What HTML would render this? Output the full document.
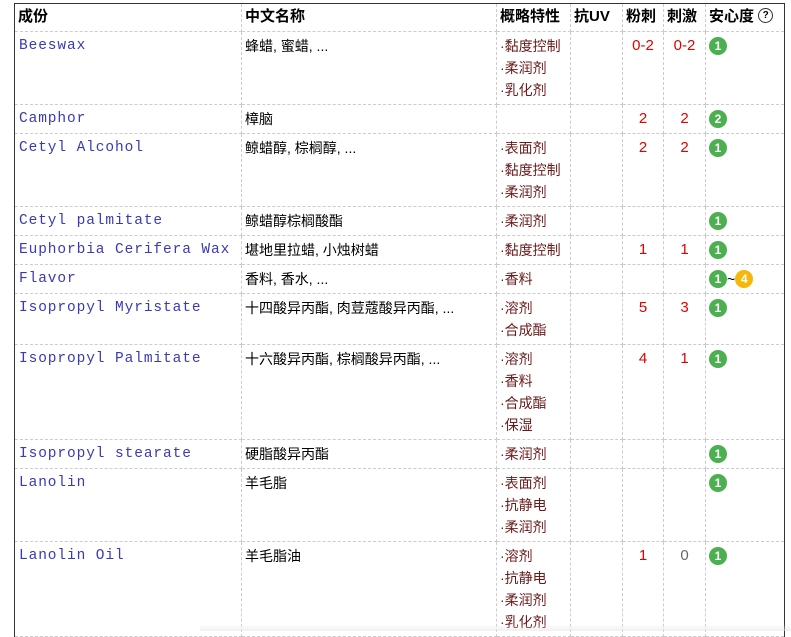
<!DOCTYPE html>
<html><head><meta charset="utf-8"><style>
body{margin:0;background:#fff;width:791px;height:631px;overflow:hidden;position:relative;font-family:"Liberation Sans","Noto Sans CJK SC",sans-serif;font-size:14px;color:#000}
table{position:absolute;left:14px;top:3px;border-collapse:collapse;table-layout:fixed;width:770px;border-top:1px solid #333;border-left:1px solid #333;border-right:1px solid #333}
td,th{border:1px dashed #ccc;vertical-align:top;padding:3px 3px;line-height:22px;text-align:left;white-space:nowrap;overflow:hidden}
th{font-weight:bold;height:22px;padding-top:2px;font-size:15px}
tr:first-child th{border-top:none}
td:first-child,th:first-child{border-left:none}
td:last-child,th:last-child{border-right:none}
.en{font-family:"Liberation Mono",monospace;color:#3a3ab5;font-size:14.5px;letter-spacing:0.9px;padding-left:4px}
.p{color:#6b1a1a}
.n{text-align:center;color:#e00000;font-size:15px;padding-left:0;padding-right:0}
.g{color:#666}
.c{display:inline-block;width:18px;height:18px;border-radius:50%;background:#4caf50;color:#fff;font-size:12px;line-height:18px;text-align:center;font-weight:bold;vertical-align:middle;margin-top:-3px}
.o{background:#f5b70a}
.q{display:inline-block;width:13px;height:13px;border:1px solid #333;border-radius:50%;font-size:10px;line-height:13px;text-align:center;vertical-align:middle;margin-top:-3px}
.sh{position:absolute;left:200px;top:624px;width:591px;height:7px;background:linear-gradient(rgba(255,255,255,0),rgba(230,230,230,0.6))}
</style></head><body>
<table>
<colgroup><col style="width:227px"><col style="width:255px"><col style="width:74px"><col style="width:52px"><col style="width:41px"><col style="width:42px"><col style="width:79px"></colgroup>
<tr><th>成份</th><th>中文名称</th><th>概略特性</th><th>抗UV</th><th>粉刺</th><th>刺激</th><th>安心度 <span class="q">?</span></th></tr>
<tr style="height:72px"><td class="en">Beeswax</td><td>蜂蜡, 蜜蜡, ...</td><td class="p">·黏度控制<br>·柔润剂<br>·乳化剂</td><td></td><td class="n">0-2</td><td class="n">0-2</td><td><span class="c">1</span></td></tr>
<tr><td class="en">Camphor</td><td>樟脑</td><td></td><td></td><td class="n">2</td><td class="n">2</td><td><span class="c">2</span></td></tr>
<tr><td class="en">Cetyl Alcohol</td><td>鲸蜡醇, 棕榈醇, ...</td><td class="p">·表面剂<br>·黏度控制<br>·柔润剂</td><td></td><td class="n">2</td><td class="n">2</td><td><span class="c">1</span></td></tr>
<tr><td class="en">Cetyl palmitate</td><td>鲸蜡醇棕榈酸酯</td><td class="p">·柔润剂</td><td></td><td></td><td></td><td><span class="c">1</span></td></tr>
<tr><td class="en">Euphorbia Cerifera Wax</td><td>堪地里拉蜡, 小烛树蜡</td><td class="p">·黏度控制</td><td></td><td class="n">1</td><td class="n">1</td><td><span class="c">1</span></td></tr>
<tr><td class="en">Flavor</td><td>香料, 香水, ...</td><td class="p">·香料</td><td></td><td></td><td></td><td><span class="c">1</span>~<span class="c o">4</span></td></tr>
<tr><td class="en">Isopropyl Myristate</td><td>十四酸异丙酯, 肉荳蔻酸异丙酯, ...</td><td class="p">·溶剂<br>·合成酯</td><td></td><td class="n">5</td><td class="n">3</td><td><span class="c">1</span></td></tr>
<tr><td class="en">Isopropyl Palmitate</td><td>十六酸异丙酯, 棕榈酸异丙酯, ...</td><td class="p">·溶剂<br>·香料<br>·合成酯<br>·保湿</td><td></td><td class="n">4</td><td class="n">1</td><td><span class="c">1</span></td></tr>
<tr><td class="en">Isopropyl stearate</td><td>硬脂酸异丙酯</td><td class="p">·柔润剂</td><td></td><td></td><td></td><td><span class="c">1</span></td></tr>
<tr><td class="en">Lanolin</td><td>羊毛脂</td><td class="p">·表面剂<br>·抗静电<br>·柔润剂</td><td></td><td></td><td></td><td><span class="c">1</span></td></tr>
<tr><td class="en">Lanolin Oil</td><td>羊毛脂油</td><td class="p">·溶剂<br>·抗静电<br>·柔润剂<br>·乳化剂</td><td></td><td class="n">1</td><td class="n g">0</td><td><span class="c">1</span></td></tr>
</table>
<div class="sh"></div>
</body></html>
